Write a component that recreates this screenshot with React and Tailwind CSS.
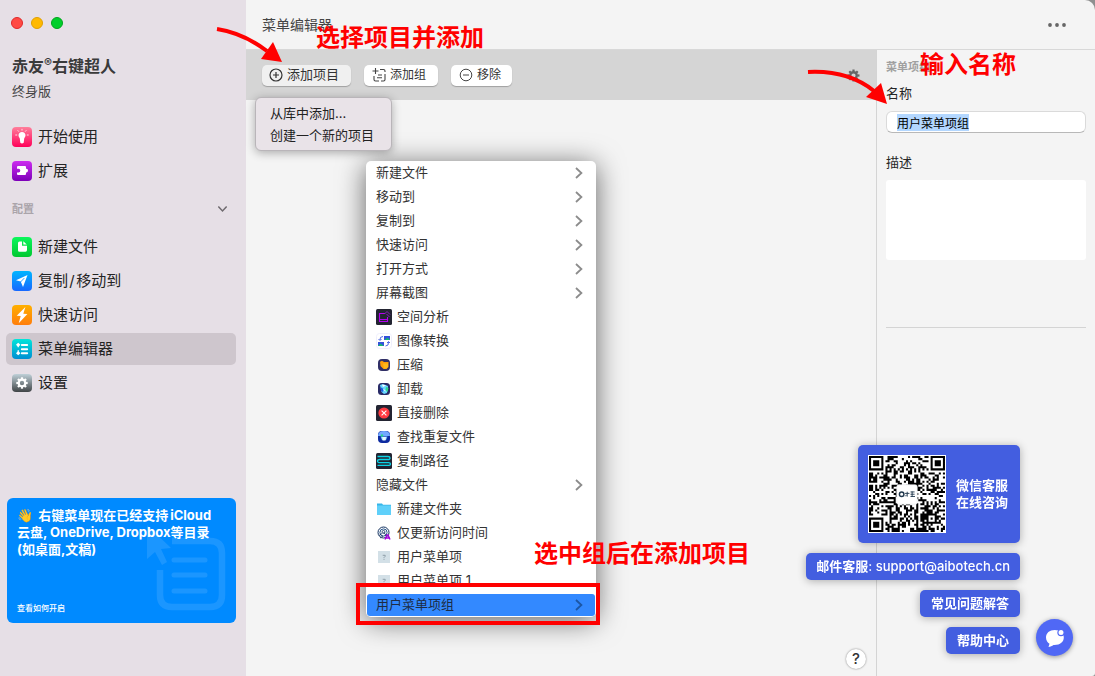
import React, { useEffect, useRef } from "react";

/* ---------- shared glyphs ---------- */

function Gear({ className }) {
  return (
    <svg viewBox="0 0 20 20" className={className} fill="none" stroke="currentColor" aria-hidden="true">
      <circle cx="10" cy="10" r="5" strokeWidth="3.6" />
      {[0, 45, 90, 135, 180, 225, 270, 315].map((a) => (
        <path key={a} d="M10 0.8V4" strokeWidth="3.4" transform={`rotate(${a} 10 10)`} />
      ))}
    </svg>
  );
}

function Chevron({ className }) {
  return (
    <svg viewBox="0 0 8 12" className={className} fill="none" stroke="currentColor" strokeWidth="1.8" aria-hidden="true">
      <path d="M1 1l5.4 5L1 11" />
    </svg>
  );
}

function Tile({ from, to, id, children }) {
  return (
    <svg viewBox="0 0 20 20" className="size-5 shrink-0" aria-hidden="true">
      <defs>
        <linearGradient id={id} x1="0" y1="0" x2="0" y2="1">
          <stop offset="0" stopColor={from} />
          <stop offset="1" stopColor={to} />
        </linearGradient>
      </defs>
      <rect width="20" height="20" rx="4" fill={`url(#${id})`} />
      {children}
    </svg>
  );
}

const navIcons = {
  start: (
    <Tile id="t-start" from="#ff7f9b" to="#ff0059">
      <path d="M10 5c-2.100 0-3.500 1.400-3.500 3.200 0 1.400.9 2.300 1.300 3.400l.5 4.200q1.700 1.300 3.400 0l.5-4.200c.4-1.100 1.300-2 1.300-3.400C13.500 6.400 12.100 5 10 5z" fill="#fff" />
      <path d="M10 1.900v1.700M5.700 3.300l1.100 1.300M14.300 3.300l-1.100 1.300M3.300 8h1.900M14.800 8h1.900" stroke="#ffe0e8" strokeWidth="1" />
    </Tile>
  ),
  ext: (
    <Tile id="t-ext" from="#cc2df0" to="#7d00b8">
      <path d="M6 5h7q1 0 1 1v1.700h.6q1.400.2 1.400 1.900t-1.400 1.900H14V13q0 1-1 1H6q-1 0-1-1v-1.500h1.500q1.800-.1 1.800-1.900T6.500 7.700H5V6q0-1 1-1z" fill="#fff" />
    </Tile>
  ),
  file: (
    <Tile id="t-file" from="#0cf75c" to="#00c730">
      <path d="M7.500 4.500H10v4.200h5V13q0 1.800-1.500 1.800h-6Q6 14.800 6 13.200V6q0-1.500 1.500-1.500z" fill="#fff" />
      <path d="M11.300 4.200v3.300h3.500z" fill="#fff" />
    </Tile>
  ),
  move: (
    <Tile id="t-move" from="#00b5ff" to="#1768ff">
      <path d="M15.500 4L4 9.300l4.700 1.300L11 16z" fill="#fff" />
      <path d="M8.500 11l3.800-3.900" stroke="#1591ff" strokeWidth=".9" />
    </Tile>
  ),
  bolt: (
    <Tile id="t-bolt" from="#ffb000" to="#ff7d0c">
      <path d="M13.400 2L4.700 10.800l4 .2-2 7.200 8.700-9.300-4.100-.2z" fill="#fff" />
    </Tile>
  ),
  menu: (
    <Tile id="t-menu" from="#00e6da" to="#008ed2">
      <g fill="none" stroke="#fff" strokeWidth="1.900" strokeLinecap="round">
        <path d="M9.800 6h5.400M9.800 10.200h5.400M9.800 14.300h5.400" />
      </g>
      <path d="M6.200 6.500v1.800M6.200 11v3" stroke="#fff" strokeWidth="1" />
      <path d="M6.200 3.700l2.200 2.100-2.200 2.100L4 5.800zM6.200 12.100l2.200 2.100-2.200 2.100L4 14.200z" fill="#fff" />
    </Tile>
  ),
  settings: (
    <svg viewBox="0 0 20 20" className="size-5 shrink-0" aria-hidden="true">
      <defs>
        <linearGradient id="t-set" x1="0" y1="0" x2="0" y2="1">
          <stop offset="0" stopColor="#bfd0d8" />
          <stop offset="1" stopColor="#404446" />
        </linearGradient>
      </defs>
      <rect y="1" width="20" height="18" rx="4" fill="url(#t-set)" />
      <circle cx="10" cy="10" r="3.300" fill="none" stroke="#fff" strokeWidth="2.200" />
      {[0, 45, 90, 135, 180, 225, 270, 315].map((a) => (
        <path key={a} d="M10 4.300v2" stroke="#fff" strokeWidth="2.200" transform={`rotate(${a} 10 10)`} />
      ))}
    </svg>
  ),
};

function Small({ children }) {
  return (
    <svg viewBox="0 0 16 16" className="size-4 shrink-0" aria-hidden="true">
      {children}
    </svg>
  );
}

const itemIcons = {
  space: (
    <Small>
      <rect width="16" height="16" rx="1.500" fill="#232432" />
      <path d="M9 4.500H3.500v8h8V8M4 10.500h7" fill="none" stroke="#b400f0" strokeWidth="1.100" />
      <path d="M8.500 5l2.500-2.500 3 3M10.500 5l3 3" fill="none" stroke="#8f1ac0" />
    </Small>
  ),
  image: (
    <Small>
      <rect x=".5" y=".5" width="15" height="15" rx="3" fill="#fff" stroke="#efeffc" />
      <rect x="8" y="3" width="6" height="4" fill="#3450dc" />
      <path d="M8.500 7l3-2.500L14 7z" fill="#16b573" />
      <rect x="2" y="9" width="6" height="4" fill="#3450dc" />
      <path d="M2 13l2.500-2.500L8 13z" fill="#16b573" />
      <path d="M7 3.500Q3.500 3.500 4 7M2.500 6l1.500 1.500L5.500 6M9.500 13q3.500 0 3-4M11 10l1.500-1.500L14 10" fill="none" stroke="#4f67e4" />
    </Small>
  ),
  zip: (
    <Small>
      <rect x="2" y="2" width="12" height="12" rx="4" fill="#302f66" />
      <path d="M4 4.700l2-1 2 1.300h4.500v5L10.500 12H7.500L4.500 9z" fill="#ff9e0a" />
      <path d="M7 6.500h5v3L10.500 11.500H8z" fill="#ffb81c" />
    </Small>
  ),
  uninstall: (
    <Small>
      <rect x="2" y="2" width="12" height="12" rx="3.500" fill="#282a66" />
      <path d="M4 4l3-1 5 2-1 7-3 1-2.500-2z" fill="#69d8ff" />
      <path d="M4.500 6l3 2-.5 3-2-1z" fill="#1c5de0" />
      <path d="M10 6l2.500 1-1 4-2-2z" fill="#2edb8a" />
      <path d="M6 3.500l4 1-3 1.500z" fill="#fff" />
      <path d="M7.500 8.500l2 1.500" stroke="#fff" />
    </Small>
  ),
  del: (
    <Small>
      <rect width="16" height="16" rx="1.500" fill="#232432" />
      <circle cx="8" cy="8" r="5.600" fill="#ff3a42" />
      <path d="M5.600 5.600l4.800 4.800M10.400 5.600l-4.800 4.800" stroke="#fff" strokeWidth="1.100" />
    </Small>
  ),
  dup: (
    <Small>
      <rect x="2" y="2" width="12" height="12" rx="4" fill="#0d2ba0" />
      <path d="M2 7q0-5 6-5t6 5z" fill="#72a8ff" />
      <path d="M4.500 7.500h7L10 11H6z" fill="#7cc4ff" />
      <path d="M6.200 8h3.800l-.5 3.500H6.600z" fill="#e7fbff" />
      <circle cx="6" cy="6.500" r="1.200" fill="#27d58c" />
    </Small>
  ),
  path: (
    <Small>
      <rect width="16" height="16" rx="1.500" fill="#232432" />
      <path d="M1.500 3.500H12q2 0 2 1.500t-2 1.500H4M4 6.500q-2.500 0-2.500 1.600T4 9.700h8.500q2 0 2 1.200T13 12.300H1.500" fill="none" stroke="#0cd5e8" strokeWidth="1.300" />
    </Small>
  ),
  folder: (
    <Small>
      <path d="M1 2.500h5l1 1.300h8V13q0 1-1 1H2q-1 0-1-1z" fill="#36b5e8" />
      <path d="M1 4.500h14V14H1z" fill="#5fd0fa" />
    </Small>
  ),
  time: (
    <Small>
      <circle cx="7.500" cy="7.500" r="5.500" fill="none" stroke="#12305e" strokeWidth="1" />
      <circle cx="7.500" cy="7.500" r="3.600" fill="none" stroke="#23528a" strokeWidth="1" />
      <circle cx="7.500" cy="7" r="1.500" fill="#fff" stroke="#12305e" strokeWidth=".8" />
      <path d="M3 10.500l3-2M4 13l3-2M7.500 7l3 4" stroke="#12305e" strokeWidth=".8" />
      <path d="M9 14.500l2-4.500h1l2 4.500M10 13h4" fill="none" stroke="#a400dc" strokeWidth="1.400" />
    </Small>
  ),
  user: (
    <Small>
      <rect x="2" y="2" width="12" height="12" fill="#d3e0e7" />
      <path d="M6.700 6.300h2.500v1L8 8.600v.6M8 10v.8" fill="none" stroke="#8797a1" strokeWidth=".9" />
    </Small>
  ),
};

/* ---------- QR code ---------- */

const QR_SIZE = 37;

function qrPath() {
  const finder = (x, y) => {
    const d = Math.max(Math.abs(x - 3), Math.abs(y - 3));
    return d !== 2 && d <= 3;
  };
  let seed = 90217;
  let d = "";
  for (let y = 0; y < QR_SIZE; y++) {
    for (let x = 0; x < QR_SIZE; x++) {
      seed = (seed * 1103515245 + 12345) % 2147483648;
      let on = seed / 2147483648 > 0.5;
      if (x < 8 && y < 8) on = finder(x, y);
      else if (x > 28 && y < 8) on = finder(x - 30, y);
      else if (x < 8 && y > 28) on = finder(x, y - 30);
      else if (Math.max(Math.abs(x - 30), Math.abs(y - 30)) <= 2)
        on = Math.max(Math.abs(x - 30), Math.abs(y - 30)) !== 1;
      else if (x === 6) on = y % 2 === 0;
      else if (y === 6) on = x % 2 === 0;
      if (on) d += `M${x + 1} ${y + 1}h1v1h-1z`;
    }
  }
  return d;
}

const QR_PATH = qrPath();

function QrCode() {
  return (
    <svg viewBox="0.5 0.5 38 38" className="size-[78px] shrink-0 bg-white" role="img" aria-label="微信二维码">
      <path d={QR_PATH} fill="#000" />
      <rect x="14.500" y="15" width="10" height="9.500" rx="1" fill="#fff" stroke="#e4e7ea" strokeWidth=".3" />
      <circle cx="16.900" cy="19.600" r="1.100" fill="none" stroke="#21384d" strokeWidth=".7" />
      <path d="M18.500 19.200h2.200M19.600 18.400v2.400M18.700 20.600l.6-.7M21.200 18.500h2M21.200 19.600h2M21.200 20.700h2.200M22 18.300v2.500" stroke="#21384d" strokeWidth=".45" />
    </svg>
  );
}

/* ---------- sidebar ---------- */

const topNav = [
  { icon: "start", label: "开始使用" },
  { icon: "ext", label: "扩展" },
];
const configNav = [
  { icon: "file", label: "新建文件" },
  { icon: "move", label: "复制\u200a/\u200a移动到" },
  { icon: "bolt", label: "快速访问" },
  { icon: "menu", label: "菜单编辑器", active: true },
  { icon: "settings", label: "设置" },
];

function NavList({ items }) {
  return (
    <ul className="flex flex-col gap-0.5">
      {items.map((it) => (
        <li key={it.label}>
          <a
            href="#"
            aria-current={it.active ? "page" : undefined}
            className={
              it.active
                ? "flex h-8 items-center gap-1.5 rounded-[5px] bg-[#cec6cd] px-1.5 text-[15px] text-[#242424]"
                : "flex h-8 items-center gap-1.5 rounded-[5px] px-1.5 text-[15px] text-[#242424]"
            }
          >
            {navIcons[it.icon]}
            {it.label}
          </a>
        </li>
      ))}
    </ul>
  );
}

function Sidebar() {
  return (
    <aside className="flex w-[246px] shrink-0 flex-col bg-[#e6dfe6] pr-2.5 pl-1.5">
      <div className="flex gap-2 pt-[17px] pl-[5px]">
        <button aria-label="关闭" className="size-3 rounded-full border border-[#e0282a] bg-[#ff4a44]" />
        <button aria-label="最小化" className="size-3 rounded-full border border-[#e0a000] bg-[#ffb900]" />
        <button aria-label="缩放" className="size-3 rounded-full border border-[#00a51c] bg-[#00cf2b]" />
      </div>
      <h1 className="mt-[25px] pl-1.5 text-base leading-6 font-semibold text-[#3a3a3a]">
        赤友<sup className="top-[-5px] text-xs">®</sup>右键超人
      </h1>
      <p className="mt-[3px] pl-1.5 text-[13px] leading-5 text-[#444]">终身版</p>
      <nav className="mt-5">
        <NavList items={topNav} />
        <button className="my-3.5 flex h-4 w-full items-center justify-between pr-2.5 pl-1.5 text-[11px] font-bold text-[#aaa4aa]">
          配置
          <Chevron className="h-[10px] w-[7px] rotate-90 text-[#6f6a6f]" />
        </button>
        <NavList items={configNav} />
      </nav>
      <a
        href="#"
        className="relative mt-auto mb-[53px] ml-px flex h-[125px] flex-col justify-between overflow-hidden rounded-md bg-[#008aff] px-2.5 pt-[9px] pb-2.5 text-white"
      >
        <svg viewBox="0 0 90 104" className="absolute right-2 bottom-2 h-[104px] w-[90px]" fill="none" stroke="#1b96ff" aria-hidden="true">
          <path d="M34 30h38q12 0 12 12v42q0 12-12 12H34q-12 0-12-12V59" strokeWidth="6.500" />
          <path d="M36 49h31M36 64h31M36 80h31" strokeWidth="5" strokeLinecap="round" />
          <path d="M9 14v34l8-7 7 13 5-3-6-13 10-1z" fill="#1b96ff" stroke="none" />
        </svg>
        <p className="relative text-[13px] leading-[17px] font-bold whitespace-nowrap">
          👋{" \u2009"}右键菜单现在已经支持{"\u2009"}iCloud
          <br />
          云盘, OneDrive, Dropbox等目录
          <br />
          (如桌面,文稿)
        </p>
        <span className="relative text-[8px] leading-[10px] font-medium">查看如何开启</span>
      </a>
    </aside>
  );
}

/* ---------- editor ---------- */

const menuItems = [
  { label: "新建文件", sub: true },
  { label: "移动到", sub: true },
  { label: "复制到", sub: true },
  { label: "快速访问", sub: true },
  { label: "打开方式", sub: true },
  { label: "屏幕截图", sub: true },
  { label: "空间分析", icon: "space" },
  { label: "图像转换", icon: "image" },
  { label: "压缩", icon: "zip" },
  { label: "卸载", icon: "uninstall" },
  { label: "直接删除", icon: "del" },
  { label: "查找重复文件", icon: "dup" },
  { label: "复制路径", icon: "path" },
  { label: "隐藏文件", sub: true },
  { label: "新建文件夹", icon: "folder" },
  { label: "仅更新访问时间", icon: "time" },
  { label: "用户菜单项", icon: "user" },
  { label: "用户菜单项 1", icon: "user" },
  { label: "用户菜单项组", sub: true, active: true },
];

function ContextMenu() {
  return (
    <div className="relative w-[230px]">
      <ul className="rounded-[5px] bg-white text-[13px] text-[#333] shadow-[0_4px_28px_rgba(0,0,0,0.6)]">
        {menuItems.map((it) => (
          <li key={it.label} className="flex h-6 items-center px-px">
            <button
              className={
                it.active
                  ? "flex h-[22px] w-full items-center gap-[5px] rounded-[3px] bg-[#3389ff] pr-3 pl-[9px] text-[#1d2c44]"
                  : "flex h-[22px] w-full items-center gap-[5px] pr-3 pl-[9px]"
              }
            >
              {it.icon && itemIcons[it.icon]}
              {it.label}
              {it.sub && (
                <Chevron className={it.active ? "ml-auto h-3 w-2 text-[#1c56a5]" : "ml-auto h-3 w-2 text-[#8c8c8c]"} />
              )}
            </button>
          </li>
        ))}
      </ul>
      <div className="pointer-events-none absolute -right-1 -bottom-2 -left-2.5 h-[42px] border-4 border-[#f00]" />
    </div>
  );
}

const toolButton =
  "flex h-[21px] items-center rounded-[5px] text-[#333] shadow-[0_1px_1px_rgba(0,0,0,0.25)]";

function Toolbar() {
  return (
    <div className="flex h-[50px] items-center gap-[13px] bg-[#d5d5d5] px-4">
      <div className="relative">
        <button className={`${toolButton} gap-1 bg-[#f0f0f0] pr-3 pl-[7px] text-[13px]`} aria-haspopup="menu" aria-expanded="true">
          <svg viewBox="0 0 14 14" className="size-3.5" fill="none" stroke="#333" strokeWidth="1.200" aria-hidden="true">
            <circle cx="7" cy="7" r="6" />
            <path d="M4 7h6M7 4v6" />
          </svg>
          添加项目
        </button>
        <div
          role="menu"
          className="absolute top-8 -left-[7px] z-20 w-[137px] rounded-md border border-[#b9b5b9] bg-[#e9e3e8] py-1 text-[13px] text-[#222] shadow-[0_2px_10px_rgba(0,0,0,0.3)]"
        >
          <button role="menuitem" className="block h-[22px] w-full px-3.5 text-left leading-[22px]">
            从库中添加...
          </button>
          <button role="menuitem" className="block h-[22px] w-full px-3.5 text-left leading-[22px]">
            创建一个新的项目
          </button>
        </div>
      </div>
      <button className={`${toolButton} gap-1 bg-white pr-3 pl-2 text-xs`}>
        <svg viewBox="0 0 14 14" className="size-3.5" fill="none" stroke="#444" strokeWidth="1.100" aria-hidden="true">
          <path d="M3.500 0v6M.5 3h6M8 1.500h3.500q1.500 0 1.500 1.500v1M13 6v5.500q0 1.500-1.500 1.500H9M7 13H3.500Q2 13 2 11.500V8M6 7h4M5 9.800h5" />
        </svg>
        添加组
      </button>
      <button className={`${toolButton} gap-1 bg-white pr-[11px] pl-2 text-xs`}>
        <svg viewBox="0 0 14 14" className="size-3.5" fill="none" stroke="#444" strokeWidth="1" aria-hidden="true">
          <circle cx="7" cy="7" r="5.800" />
          <path d="M4 7h6" />
        </svg>
        移除
      </button>
      <button aria-label="选项" className="ml-auto text-[#666]">
        <Gear className="size-[13px]" />
      </button>
    </div>
  );
}

function Inspector() {
  const nameRef = useRef(null);
  useEffect(() => {
    nameRef.current.focus();
    nameRef.current.select();
  }, []);
  return (
    <section className="w-[219px] shrink-0 border-l border-[#d4d4d4] px-[9px] pt-[9px] text-[13px] text-[#262626]">
      <h2 className="text-[11px] leading-4 font-bold text-[#a0a0a0]">菜单项组</h2>
      <label htmlFor="item-name" className="mt-2.5 block leading-4">
        名称
      </label>
      <input
        id="item-name"
        ref={nameRef}
        type="text"
        defaultValue="用户菜单项组"
        className="mt-2.5 block h-[22px] w-full rounded-md border border-[#dadada] border-b-[#b8b8b8] bg-white px-2.5 text-xs text-black outline-none selection:bg-[#b3d7ff] selection:text-black"
      />
      <label htmlFor="item-desc" className="mt-[21px] block leading-4">
        描述
      </label>
      <textarea id="item-desc" className="mt-2.5 block h-20 w-full resize-none rounded-[3px] bg-white outline-none" />
      <hr className="mt-[67px] border-[#d4d4d4]" />
    </section>
  );
}

/* ---------- support widget ---------- */

const chip = "rounded-[5px] bg-[#435ee0] text-[13px] font-semibold text-white shadow-[0_1px_8px_rgba(0,0,0,0.3)]";

function Support() {
  return (
    <div className="fixed right-[22px] bottom-5 z-30 flex items-end gap-4">
      <div className="flex flex-col items-end gap-2.5 pb-0.5">
        <div className={`${chip} flex items-center gap-2.5 py-2.5 pr-3 pl-2.5`}>
          <QrCode />
          <p className="leading-[17px]">
            微信客服
            <br />
            在线咨询
          </p>
        </div>
        <a href="mailto:support@aibotech.cn" className={`${chip} px-2.5 leading-[27px]`}>
          邮件客服<span className="font-medium">: support@aibotech.cn</span>
        </a>
        <a href="#" className={`${chip} px-[11px] leading-[27px]`}>
          常见问题解答
        </a>
        <a href="#" className={`${chip} px-[11px] leading-[27px]`}>
          帮助中心
        </a>
      </div>
      <button
        aria-label="在线聊天"
        className="flex size-[37px] items-center justify-center rounded-full bg-[#5068f5] shadow-[0_1px_5px_rgba(0,0,0,0.4)]"
      >
        <svg viewBox="0 0 20 20" className="size-5" aria-hidden="true">
          <path d="M9.800 2C4.500 2 1 5 1 9.600c0 3 1.500 5 3.500 6.200L3.500 19c2-.3 3.500-1 5-2 6.500.3 10.300-2.800 10.300-7.400C18.800 5 15 2 9.800 2z" fill="#fff" />
          <circle cx="16" cy="4.500" r="3.100" fill="#fff" stroke="#5068f5" strokeWidth="1.200" />
        </svg>
      </button>
    </div>
  );
}

/* ---------- tutorial annotations ---------- */

const note = "absolute z-40 text-2xl leading-8 font-semibold whitespace-nowrap text-[#f00]";

function Annotations() {
  return (
    <div className="pointer-events-none">
      <svg viewBox="0 0 70 40" className="absolute top-[25px] left-[215px] z-40 h-10 w-[70px]" aria-hidden="true">
        <path d="M2 4Q28 8 52 26" fill="none" stroke="#f00" strokeWidth="4" />
        <path d="M67 37L58 17 46 34z" fill="#f00" />
      </svg>
      <p className={`${note} top-[22px] left-[316px]`}>选择项目并添加</p>
      <svg viewBox="0 0 84 40" className="absolute top-[67px] right-[205px] z-40 h-10 w-[84px]" aria-hidden="true">
        <path d="M2 5Q42 3 68 24" fill="none" stroke="#f00" strokeWidth="4" />
        <path d="M81 37L75 16 60 30z" fill="#f00" />
      </svg>
      <p className={`${note} top-[49px] right-[79px]`}>输入名称</p>
      <p className={`${note} top-[538px] left-[534px]`}>选中组后在添加项目</p>
    </div>
  );
}

export default function App() {
  return (
    <div className="bg-[#8f8f8f]">
      <div className="relative flex min-h-screen overflow-hidden rounded-tr-[10px] rounded-br-[3px] bg-[#f4f4f4] font-['Inter','Noto_Sans_CJK_SC',sans-serif]">
        <Sidebar />
        <div className="flex min-w-0 flex-1 flex-col">
          <header className="flex h-[50px] items-center justify-between border-b border-[#d8d8d8] pr-7 pl-4">
            <h2 className="text-sm text-[#444]">菜单编辑器</h2>
            <button aria-label="更多">
              <svg viewBox="0 0 20 4" className="h-1 w-5" fill="#666" aria-hidden="true">
                <circle cx="3" cy="2" r="1.900" />
                <circle cx="10" cy="2" r="1.900" />
                <circle cx="17" cy="2" r="1.900" />
              </svg>
            </button>
          </header>
          <div className="flex flex-1">
            <main className="flex min-w-0 flex-1 flex-col">
              <Toolbar />
              <div className="flex flex-1 flex-col justify-between pt-[61px] pr-2.5 pb-[7px] pl-[120px]">
                <ContextMenu />
                <button
                  aria-label="帮助"
                  className="size-5 self-end rounded-full bg-white text-[15px] leading-5 font-medium text-[#333] shadow-[0_0_2px_rgba(0,0,0,0.5)]"
                >
                  ?
                </button>
              </div>
            </main>
            <Inspector />
          </div>
        </div>
        <Support />
        <Annotations />
      </div>
    </div>
  );
}
